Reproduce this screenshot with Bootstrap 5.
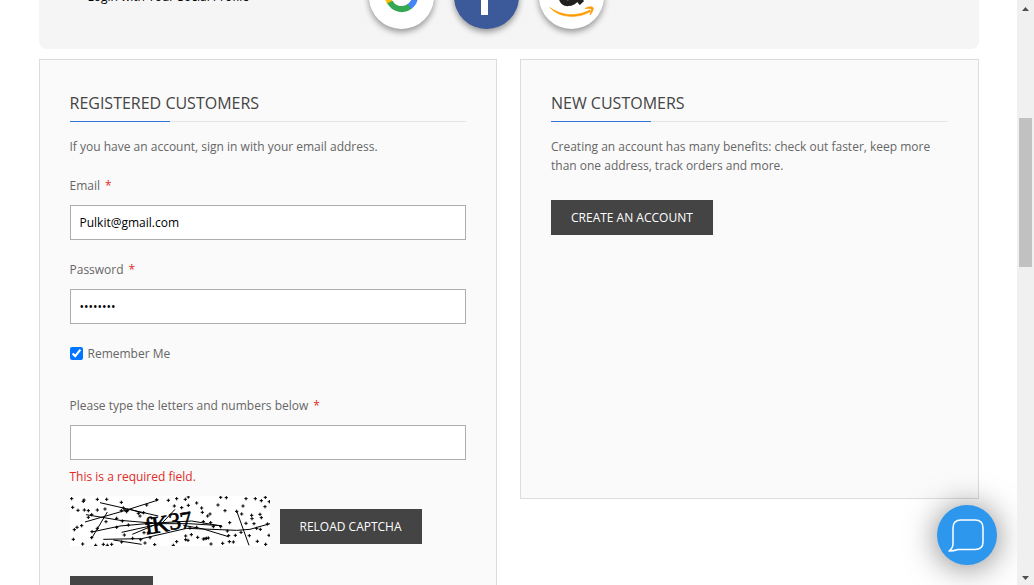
<!DOCTYPE html>
<html lang="en">
<head>
<meta charset="utf-8">
<meta name="viewport" content="width=device-width, initial-scale=1">
<title>Customer Login</title>
<link href="https://cdn.jsdelivr.net/npm/bootstrap@5.3.0/dist/css/bootstrap.min.css" rel="stylesheet">
<style>
body { font-family: "Open Sans", sans-serif; font-size: 12px; line-height: 19px; color: #666; background: #fff; }
.page-area { min-width: 0; }
.page-inner { max-width: 940px; }
/* the page is scrolled so the social panel is half out of view */
.social-panel { margin-top: -56px; padding: 20px 49px; background: #f5f5f5; border-radius: 8px; color: #000; gap: 20px; }
.social-label { width: 261px; }
.social-btn { width: 65px; height: 65px; box-shadow: 0 3px 6px rgba(0,0,0,.4); background: #fff; }
.social-btn svg { width: 65px; height: 65px; }
.social-btn.facebook { background: #3c5a99; }
.panels { gap: 23px; margin-top: 10px; }
.login-block { flex: 1 1 0; min-width: 0; padding: 30px; background: #fafafa; border: 1px solid #dcdcdc; }
.login-block.short { min-height: 440px; }
.block-title { font-size: 16px; line-height: 26px; color: #444; font-weight: 400; padding-bottom: 5px; border-bottom: 1px solid #e5e5e5; margin-bottom: 15px; position: relative; }
.block-title::after { content: ""; position: absolute; left: 0; bottom: -1px; width: 100px; height: 1px; background: #3374d9; }
.required::after { content: "*"; color: #e02b27; margin-left: 5px; }
.field-label { display: block; margin-bottom: 10px; }
.field { margin-bottom: 20px; }
.intro { margin-bottom: 25px; }
.field-input { height: 35px; font-size: 12px; color: #000; padding: 0 9px; border: 1px solid #adadad; border-radius: 0; background: #fff; }
.dark-btn { height: 35px; padding: 0 20px; font-size: 12px; line-height: 35px; background: #444; color: #fff; border: 0; border-radius: 0; text-transform: uppercase; }
.dark-btn:hover { background: #333; color: #fff; }
.remember { gap: 5px; margin-bottom: 33px; }
.remember input { width: 13px; height: 13px; margin: 0; accent-color: #0075ff; }
.error-text { color: #e02b27; margin-top: 7px; }
.captcha-row { gap: 10px; margin: 10px 0 30px; }
.captcha-row .dark-btn { margin-bottom: 2px; }
.chat-btn { position: fixed; right: 37px; bottom: 20px; width: 60px; height: 60px; background: #2d97ee; box-shadow: 0 2px 32px rgba(0,0,0,.5); }
.scroll-track { width: 17px; background: #f0f0f0; padding: 7px 0 5px; z-index: 2; }
.scroll-thumb { width: 13px; height: 26%; margin-top: 107px; background: #c1c1c1; }
</style>
</head>
<body>
<div class="d-flex vh-100 overflow-hidden">
  <main class="page-area flex-grow-1">
    <div class="page-inner mx-auto">
    <section class="social-panel d-flex align-items-center">
      <span class="social-label flex-shrink-0">Login with Your Social Profile</span>
      <a class="social-btn rounded-circle d-block flex-shrink-0" href="#" aria-label="Google">
        <svg class="d-block" viewBox="0 0 65 65" fill="none" stroke-width="6">
          <path d="M42 23A13 13 0 0 0 21 26" stroke="#ea4335"/>
          <path d="M21 26A13 13 0 0 0 21 39" stroke="#fbbc05"/>
          <path d="M21 38A13 13 0 0 0 41 42" stroke="#34a853"/>
          <path d="M33 33H46A13 13 0 0 1 40.500 42.500" stroke="#4285f4"/>
        </svg>
      </a>
      <a class="social-btn facebook rounded-circle d-block flex-shrink-0" href="#" aria-label="Facebook">
        <svg class="d-block" viewBox="0 0 65 65"><path fill="#fff" d="M27 51V34h-5v-7h5v-5c0-6 4-8 12-7v6c-4 0-5 0-5 3v3h5l-1 7h-4v17z"/></svg>
      </a>
      <a class="social-btn rounded-circle d-block flex-shrink-0" href="#" aria-label="Amazon">
        <svg class="d-block" viewBox="0 0 65 65" fill="none">
          <path d="M24 24c1-9 16-9 16-1v11c0 3 2 4 3 5M39 28c-9 0-16 1-16 6 0 7 11 7 15-1" stroke="#221f1f" stroke-width="6"/>
          <path d="M11 43.500C22 52 38 53 51 46l.5 1.500C39 55 20 54 11 43.500z" fill="#ff9900" stroke="#ff9900" stroke-width=".6"/>
          <path d="M46 44.500c3-2 7-2 8-1 1 1.500-1 5.500-3 7.500.5-2 1.700-5 1.300-6-1-.8-4-.6-6.300-.5z" fill="#ff9900" stroke="#ff9900" stroke-width=".6"/>
        </svg>
      </a>
    </section>

    <div class="panels d-flex align-items-start">
      <section class="login-block">
        <h2 class="block-title text-uppercase">Registered Customers</h2>
        <form>
          <p class="field">If you have an account, sign in with your email address.</p>
          <div class="field">
            <label class="field-label required" for="email">Email</label>
            <input class="field-input form-control" id="email" type="email" value="Pulkit@gmail.com">
          </div>
          <div class="field">
            <label class="field-label required" for="pass">Password</label>
            <input class="field-input form-control" id="pass" type="password" value="password">
          </div>
          <div class="remember d-flex align-items-center">
            <input type="checkbox" id="remember" checked>
            <label for="remember">Remember Me</label>
          </div>
          <div>
            <label class="field-label required" for="captcha">Please type the letters and numbers below</label>
            <input class="field-input form-control" id="captcha" type="text">
            <div class="error-text">This is a required field.</div>
          </div>
          <div class="captcha-row d-flex align-items-end">
            <svg width="200" height="50" viewBox="0 0 600 150" role="img" aria-label="Captcha">
              <rect width="600" height="150" fill="#fff"/>
              <g stroke="#000" stroke-width="3" fill="none">
                <path d="M90 20L265 60M45 78L160 45L265 12M48 56L150 73L270 83H355L455 89"/>
                <path d="M65 108L150 90L240 82L365 75L455 90M270 88L315 40M187 115L270 80M155 109L250 88"/>
                <path d="M100 130L215 128L350 97L500 103L540 100L600 83M130 132L215 145M65 127L112 48M500 45L537 148M180 40L220 52"/>
                <path d="M340 88L400 99L475 122" />
              </g>
              <g font-family="'Liberation Serif', serif" font-size="72" fill="#000" stroke="#000" stroke-width="2" transform="rotate(-9 300 90)">
                <text x="226" y="104">f</text><text x="246" y="104">K</text><text x="298" y="102">3</text><text x="332" y="104">7</text>
              </g>
              <path id="specks" fill="none" stroke="#000" stroke-width="3"/>
            </svg>
            <button class="dark-btn btn" type="button">Reload captcha</button>
          </div>
          <button class="dark-btn btn" type="submit">Sign In</button>
        </form>
      </section>

      <section class="login-block short">
        <h2 class="block-title text-uppercase">New Customers</h2>
        <p class="intro">Creating an account has many benefits: check out faster, keep more than one address, track orders and more.</p>
        <a class="dark-btn btn" href="#">Create an Account</a>
      </section>
    </div>
    </div>
  </main>

  <div class="scroll-track d-flex flex-column align-items-center flex-shrink-0" aria-hidden="true">
    <svg width="7" height="4" viewBox="0 0 7 4"><path d="M0 4L3.500 0L7 4z" fill="#505050"/></svg>
    <div class="scroll-thumb"></div>
    <svg class="mt-auto" width="7" height="4" viewBox="0 0 7 4"><path d="M0 0L3.500 4L7 0z" fill="#505050"/></svg>
  </div>
</div>

<button class="chat-btn btn rounded-circle border-0 p-0" type="button" aria-label="Chat">
  <svg class="d-block" width="60" height="60" viewBox="0 0 60 60" fill="none" stroke="#fff" stroke-width="1.500" stroke-linejoin="round">
    <path d="M16 39V23Q16 15 24 15H38Q46 15 46 23V37Q46 44.500 38 44.500H21Q17 46 12 46Q16 43 16 39Z"/>
  </svg>
</button>

<script src="https://cdn.jsdelivr.net/npm/bootstrap@5.3.0/dist/js/bootstrap.bundle.min.js"></script>
<script>
// noise specks of the captcha: each one is a small plus sign
const specks = [5,8,42,12,40,16,82,10,110,10,154,19,8,34,24,43,43,42,82,42,105,39,154,44,173,43,205,52,210,60,221,50,260,11,295,13,320,8,346,10,355,3,452,4,469,5,528,8,556,8,574,14,586,4,598,17,585,32,335,35,355,28,313,30,380,21,395,36,397,49,444,27,465,44,413,60,420,54,500,46,519,30,515,54,545,58,570,55,574,65,546,68,552,83,592,84,528,82,571,100,479,80,452,92,400,77,422,80,430,92,472,105,476,119,496,118,513,109,538,119,560,97,597,118,562,136,587,145,458,142,478,137,490,138,423,144,400,129,415,126,383,124,364,116,347,120,347,131,354,133,320,137,310,148,254,146,225,141,212,131,222,110,235,109,240,125,188,127,163,117,155,138,125,145,100,145,112,148,77,148,38,144,10,130,65,125,13,101,21,94,35,89,66,107,55,64,65,56,140,67,157,75,175,87,140,94,82,97,108,77,230,27,55,44,160,36,165,42,170,47,405,128,409,127,360,96,380,94];
let d = "";
for (let i = 0; i < specks.length; i += 2) d += `M${specks[i] - 5} ${specks[i + 1]}h10m-5 -5v10`;
document.getElementById("specks").setAttribute("d", d);
</script>
</body>
</html>
